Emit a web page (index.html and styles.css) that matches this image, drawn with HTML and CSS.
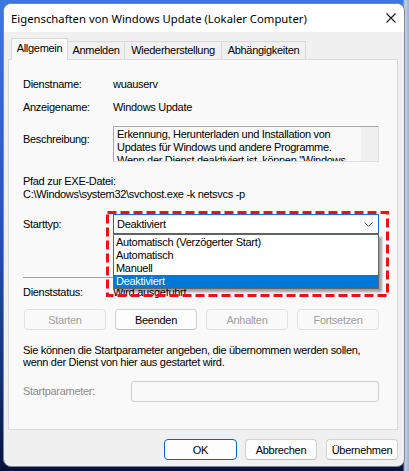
FILE: index.html
```html
<!DOCTYPE html>
<html lang="de">
<head>
<meta charset="utf-8">
<title>Eigenschaften von Windows Update</title>
<link rel="stylesheet" href="styles.css">
</head>
<body>
<div class="window">
  <div class="titlebar">
    <span class="title">Eigenschaften von Windows Update (Lokaler Computer)</span>
    <svg class="close" width="10" height="10" viewBox="0 0 10 10"><path d="M0.5 0.5L9.5 9.5M9.5 0.5L0.5 9.5" stroke="#1a1a1a" stroke-width="1.1" fill="none"/></svg>
  </div>
  <div class="tabs">
    <div class="tab active t1">Allgemein</div>
    <div class="tab t2">Anmelden</div>
    <div class="tab t3">Wiederherstellung</div>
    <div class="tab t4">Abhängigkeiten</div>
  </div>
  <div class="panel">
    <div class="row r1"><span class="label">Dienstname:</span><span class="value">wuauserv</span></div>
    <div class="row r2"><span class="label">Anzeigename:</span><span class="value">Windows Update</span></div>
    <div class="row r3">
      <span class="label lbl-desc">Beschreibung:</span>
      <div class="desc">
        <div class="desc-text">Erkennung, Herunterladen und Installation von Updates für Windows und andere Programme. Wenn der Dienst deaktiviert ist, können "Windows Update" ...</div>
        <div class="scroll"></div>
      </div>
    </div>
    <div class="path-label">Pfad zur EXE-Datei:</div>
    <div class="path">C:\Windows\system32\svchost.exe -k netsvcs -p</div>
    <div class="row r-start">
      <span class="label">Starttyp:</span>
      <div class="combo-wrap">
        <div class="combo"><span>Deaktiviert</span>
          <svg class="chev" width="9" height="5" viewBox="0 0 9 5"><path d="M0.5 0.5L4.5 4.3L8.5 0.5" stroke="#555" stroke-width="1" fill="none"/></svg>
        </div>
        <ul class="droplist">
          <li>Automatisch (Verzögerter Start)</li>
          <li>Automatisch</li>
          <li>Manuell</li>
          <li class="sel">Deaktiviert</li>
        </ul>
        <svg class="frame" width="283" height="86" viewBox="0 0 283 86"><rect x="1.5" y="1.5" width="280" height="83" fill="none" stroke="#f01010" stroke-width="3" stroke-dasharray="9 4"/></svg>
      </div>
    </div>
    <div class="sep"></div>
    <div class="row status"><span class="label">Dienststatus:</span><span class="value">Wird ausgeführt</span></div>
    <div class="svc-buttons">
      <button class="btn disabled">Starten</button>
      <button class="btn">Beenden</button>
      <button class="btn disabled">Anhalten</button>
      <button class="btn disabled">Fortsetzen</button>
    </div>
    <p class="info">Sie können die Startparameter angeben, die übernommen werden sollen,<br>wenn der Dienst von hier aus gestartet wird.</p>
    <div class="row param"><span class="label lbl-param">Startparameter:</span><div class="input"></div></div>
  </div>
  <div class="footer">
    <button class="btn fbtn ok">OK</button>
    <button class="btn fbtn cancel">Abbrechen</button>
    <button class="btn fbtn apply">Übernehmen</button>
  </div>
</div>
</body>
</html>
```
FILE: styles.css
```css
html, body {
  margin: 0;
  padding: 0;
}
body {
  width: 409px;
  height: 471px;
  overflow: hidden;
  background:
    linear-gradient(90deg, rgba(0,0,0,0) 0%, rgba(0,0,0,0) 98.5%, #c8d2e4 99%, #9fb0d0 100%),
    linear-gradient(180deg, #3a7ae0 0%, #2458bd 45%, #12307e 80%, #08123a 100%);
  font-family: "Liberation Sans", Arial, sans-serif;
  font-size: 11px;
  letter-spacing: -0.3px;
  color: #000;
}
.window {
  margin: 3px 0 0 3px;
  width: 402px;
  height: 464px;
  box-sizing: border-box;
  border: 1px solid #7d8796;
  border-radius: 8px;
  overflow: hidden;
  background: #f0f0f0;
  display: flex;
  flex-direction: column;
}
.titlebar {
  height: 28px;
  flex: none;
  background: #ffffff;
  display: flex;
  align-items: center;
  justify-content: space-between;
  padding-left: 7px;
}
.title {
  font-family: "Noto Sans", "Open Sans", sans-serif;
  font-size: 11.3px;
  letter-spacing: 0;
  color: #000;
}
.close {
  margin-right: 8px;
  display: block;
}
.tabs {
  margin: 6px 0 0 7px;
  display: flex;
  align-items: flex-end;
  height: 21px;
  flex: none;
}
.tab {
  box-sizing: border-box;
  height: 18px;
  border: 1px solid #d9d9d9;
  border-bottom: none;
  margin-left: -1px;
  background: #f0f0f0;
  display: flex;
  align-items: center;
  justify-content: center;
  line-height: 13px;
}
.tab.active {
  height: 22px;
  margin-left: 0;
  margin-bottom: -1px;
  background: #f9f9f9;
  position: relative;
  z-index: 1;
  padding-bottom: 2px;
}
.t1 { width: 57px; }
.t2 { width: 58px; }
.t3 { width: 98px; }
.t4 { width: 85px; }
.panel {
  margin: 0 0 0 4px;
  width: 390px;
  flex: none;
  box-sizing: border-box;
  border: 1px solid #dadada;
  background: #f9f9f9;
  padding: 18px 18px 27px 14px;
}
.row {
  display: flex;
  align-items: center;
  line-height: 13px;
}
.label {
  width: 90px;
  flex: none;
}
.r2 { margin-top: 10px; }
.r3 {
  margin-top: 12px;
  align-items: flex-start;
}
.lbl-desc { margin-top: 7px; }
.desc {
  flex: 1;
  height: 36px;
  box-sizing: border-box;
  border: 1px solid #a8a8a8;
  border-right-color: #e0e0e0;
  border-bottom-color: #e0e0e0;
  background: #f9f9f9;
  display: flex;
  overflow: hidden;
}
.desc-text {
  flex: 1;
  padding: 1px 0 0 3px;
  line-height: 13px;
  height: 34px;
  overflow: hidden;
}
.scroll {
  width: 17px;
  flex: none;
  background: #f0f0f0;
}
.path-label {
  margin-top: 13px;
  line-height: 13px;
}
.path {
  line-height: 13px;
}
.r-start { margin-top: 13px; }
.combo-wrap {
  flex: 1;
  position: relative;
}
.combo {
  height: 20px;
  box-sizing: border-box;
  border: 1px solid #0078d7;
  background: #ffffff;
  display: flex;
  align-items: center;
  justify-content: space-between;
  padding: 0 5px 0 3px;
}
.chev { display: block; margin-top: 1px; }
.droplist {
  position: absolute;
  left: 0;
  top: 100%;
  right: 0;
  margin: 0;
  padding: 1px 0 0 0;
  list-style: none;
  background: #ffffff;
  border: 1px solid #646464;
  box-shadow: 3px 3px 2px rgba(0,0,0,0.35);
  z-index: 2;
}
.droplist li {
  height: 13px;
  line-height: 13px;
  padding-left: 2px;
}
.droplist li.sel {
  background: #0078d7;
  color: #ffffff;
}
.frame {
  position: absolute;
  left: -7px;
  top: -3px;
  z-index: 3;
  display: block;
}
.sep {
  margin-top: 43px;
  border-top: 1px solid #a0a0a0;
}
.status { margin-top: 8px; }
.svc-buttons {
  margin-top: 10px;
  display: flex;
  justify-content: space-between;
  padding: 0 0 0 1px;
}
.btn {
  font-family: "Liberation Sans", Arial, sans-serif;
  font-size: 11px;
  letter-spacing: -0.3px;
  height: 21px;
  width: 82px;
  box-sizing: border-box;
  border: 1px solid #d0d0d0;
  border-bottom-color: #bcbcbc;
  border-radius: 4px;
  background: #fdfdfd;
  color: #000;
  padding: 0;
}
.btn.disabled {
  color: #a0a0a0;
  border-color: #e0e0e0;
  background: #f9f9f9;
}
.info {
  margin: 14px 0 0 0;
  line-height: 12px;
  white-space: nowrap;
}
.param { margin-top: 13px; }
.lbl-param {
  width: 108px;
  color: #8c8c8c;
}
.input {
  flex: 1;
  height: 21px;
  box-sizing: border-box;
  border: 1px solid #cfcfcf;
  border-radius: 3px;
  background: #f9f9f9;
}
.footer {
  margin-top: 9px;
  display: flex;
  justify-content: flex-end;
  padding-right: 6px;
}
.fbtn { width: 72px; height: 21px; }
.ok {
  width: 73px;
  border: 1px solid #0067c0;
}
.cancel { margin-left: 8px; }
.apply { margin-left: 9px; }
```
